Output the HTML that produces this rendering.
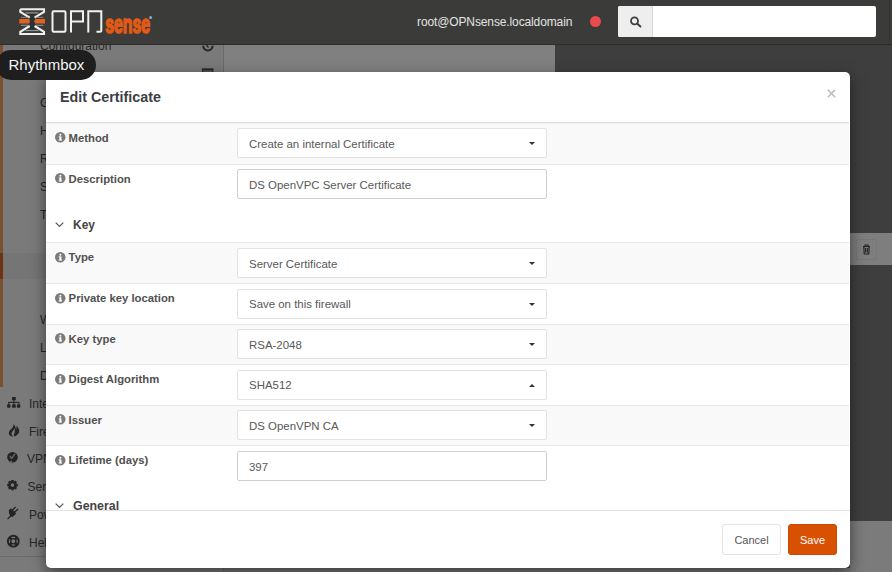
<!DOCTYPE html>
<html><head><meta charset="utf-8">
<style>
*{box-sizing:border-box;margin:0;padding:0}
html,body{width:892px;height:572px;overflow:hidden;background:#3e3e3e;font-family:"Liberation Sans",sans-serif;position:relative}
.a{position:absolute}
#hdr{z-index:5;left:0;top:0;width:892px;height:45px;background:#3b3b3a;border-bottom:1px solid #2c2c2c}
#side{left:0;top:45px;width:223px;height:527px;background:#7a7a7a}
#sideb{left:223px;top:44px;width:1px;height:528px;background:#6a6a6a}
#strip{left:224px;top:45px;width:331px;height:27px;background:#808080}
#band{left:850px;top:233px;width:42px;height:32px;background:#7e7e7e}
#bot{left:850px;top:521px;width:42px;height:51px;background:#7b7b7b}
#below{left:224px;top:568px;width:626px;height:4px;background:#777}
.si{position:absolute;left:40px;font-size:12px;color:#262626;white-space:nowrap;line-height:12px}
.mi{position:absolute;left:29px;font-size:12px;color:#262626;white-space:nowrap;line-height:12px}
#modal{left:46px;top:72px;width:804px;height:496px;background:#fff;border-radius:5px;overflow:hidden;box-shadow:0 5px 15px rgba(0,0,0,.5)}
#mt{position:absolute;left:14px;top:17px;font-size:14.3px;font-weight:bold;color:#3b3e44;line-height:16px;white-space:nowrap}
#msep{position:absolute;left:0;top:50px;width:803px;height:1px;background:#dedede}
#msep2{position:absolute;left:0;top:51px;width:803px;height:1px;background:#f0f0f0}
.gr{position:absolute;left:0;width:803px;background:#f9f9f9}
.ln{position:absolute;left:0;width:803px;height:1px;background:#e8e8e8}
.lbl{position:absolute;left:22.6px;font-size:11.3px;font-weight:bold;color:#505050;white-space:nowrap;line-height:11px}
.ic{position:absolute;left:9px;width:10.5px;height:10.5px;margin-top:0.2px}
.sel{position:absolute;left:191px;width:310px;height:30px;background:#fff;border:1px solid #e2e2e2;border-radius:2px;font-size:11.45px;color:#585858;padding:1px 0 0 11px;line-height:28px;white-space:nowrap}
.inp{border-color:#cfcfcf;height:30px}
.car{position:absolute;left:291px;top:13px;width:0;height:0;border-left:3.5px solid transparent;border-right:3.5px solid transparent;border-top:3px solid #333}
.car.up{border-top:none;border-bottom:3px solid #333}
.sh{position:absolute;left:27px;font-size:12px;font-weight:bold;color:#444;line-height:12px;white-space:nowrap}
.chev{position:absolute;left:9px;width:9px;height:6px}
.btn{position:absolute;top:452px;height:31px;font-size:11px;border-radius:3px;text-align:center;line-height:31px}
</style></head><body>
<div id="hdr" class="a">
  <div class="a" style="left:889px;top:0;width:1px;height:44px;background:#333"></div>
  <svg class="a" style="left:0;top:0" width="400" height="44" viewBox="0 0 400 44">
    <!-- logo mark -->
    <rect x="30" y="13.5" width="4.5" height="17" fill="#2b3139"/>
    <g fill="none" stroke="#f0f0f0" stroke-width="2.1" stroke-linejoin="miter">
      <path d="M20.3 9.3 H44 V11.8 L34.6 17.6 M20.3 9.3 V11.8 L29.7 17.6"/>
      <path d="M29.7 26 L20.3 31.8 V34 H44 V31.8 L34.6 26"/>
    </g>
    <path d="M25.5 12.9 H38.5" stroke="#a8a8a8" stroke-width="1"/>
    <path d="M25.5 30.6 H38.5" stroke="#9fb3b0" stroke-width="0.9"/>
    <path d="M19.3 19 H29 L30 21.3 L29 23.6 H19.3 Z" fill="#e2621c"/>
    <path d="M45 19 H35.3 L34.3 21.3 L35.3 23.6 H45 Z" fill="#e2621c"/>
    <path d="M21 17.4 H28.6 M35.7 17.4 H43.3" stroke="#8c8c8c" stroke-width="0.9"/>
    <path d="M21 25.3 H28.6 M35.7 25.3 H43.3" stroke="#9aa8a8" stroke-width="0.9"/>
    <!-- OPN -->
    <g fill="none" stroke="#f2f2f2" stroke-width="2">
      <rect x="52.5" y="11.2" width="13" height="20.6" rx="1.2"/>
      <path d="M71 32.5 V11.2 H83 V21.5 H71"/>
      <path d="M88.3 32.5 V11.2 H101.3 V30.6 Q101.3 31.8 100 31.8 H96.5"/>
    </g>
    <text x="105.2" y="33.2" font-family="Liberation Sans" font-weight="bold" font-size="19" fill="#e15a16" stroke="#e15a16" stroke-width="1.3" textLength="45" lengthAdjust="spacingAndGlyphs" transform="translate(0,-10.5) scale(1,1.32)">sense</text>
    <circle cx="150.6" cy="17.4" r="1.5" fill="#8aa8bd"/>
  </svg>
  <div class="a" style="left:417px;top:16px;font-size:12px;color:#e3e3e3;line-height:12px;white-space:nowrap;letter-spacing:-0.12px">root@OPNsense.localdomain</div>
  <div class="a" style="left:589.5px;top:16px;width:11px;height:11px;border-radius:50%;background:#e84b4b"></div>
  <div class="a" style="left:618px;top:6px;width:258px;height:31px;background:#fff;border-radius:2px"></div>
  <div class="a" style="left:618px;top:6px;width:35px;height:31px;background:#eeeeee;border-radius:2px 0 0 2px;border-right:1px solid #d8d8d8"></div>
  <svg class="a" style="left:629px;top:15px" width="13" height="13" viewBox="0 0 13 13"><circle cx="5.5" cy="5.9" r="3.5" fill="none" stroke="#3f3f3f" stroke-width="1.8"/><path d="M8.1 8.5 L11.4 11.5" stroke="#3f3f3f" stroke-width="2" stroke-linecap="round"/></svg>
</div>
<div id="side" class="a"></div>
<div class="a" style="left:0;top:45px;width:3px;height:208px;background:#7a5030"></div>
<div class="a" style="left:0;top:253px;width:223px;height:26px;background:#757575"></div>
<div class="a" style="left:0;top:253px;width:3px;height:26px;background:#6e3410"></div>
<div class="a" style="left:0;top:279px;width:3px;height:108px;background:#7a5030"></div>
<div class="a" style="left:0;top:556px;width:223px;height:1px;background:#6a6a6a"></div>
<div class="si" style="top:40px">Configuration</div>
<div class="si" style="top:97px">G</div>
<div class="si" style="top:125px">H</div>
<div class="si" style="top:153px">R</div>
<div class="si" style="top:181px">S</div>
<div class="si" style="top:209px">T</div>
<div class="si" style="top:314px">W</div>
<div class="si" style="top:342px">L</div>
<div class="si" style="top:370px">D</div>
<div class="mi" style="top:398px">Interfaces</div>
<div class="mi" style="top:426px">Firewall</div>
<div class="mi" style="top:453px;left:27px">VPN</div>
<div class="mi" style="top:481px;left:27.5px">Services</div>
<div class="mi" style="top:509px">Power</div>
<div class="mi" style="top:537px">Help</div>
<!-- sidebar icons -->
<svg class="a" style="left:0;top:380px" width="30" height="180" viewBox="0 380 30 180">
  <g fill="#232323">
    <!-- sitemap -->
    <rect x="12" y="397" width="3.8" height="3.3" rx="0.5"/><rect x="13.4" y="400" width="1" height="2.5"/><rect x="8.6" y="401.8" width="10.6" height="1.1"/>
    <rect x="8.3" y="402" width="1" height="2.3"/><rect x="13.4" y="402" width="1" height="2.3"/><rect x="18.4" y="402" width="1" height="2.3"/>
    <rect x="7.1" y="404.2" width="3.4" height="3.5" rx="0.9"/><rect x="12.1" y="404.2" width="3.6" height="3.5" rx="0.5"/><rect x="16.9" y="404.2" width="3.4" height="3.5" rx="0.9"/>
    <!-- fire -->
    <path d="M13.4 424 C 13.9 426.5, 12.2 428, 10.6 429.6 C 8.6 431.6, 8.2 434.4, 10.2 435.8 C 11.2 436.5, 12.3 436.6, 13.3 436.4 C 11.6 435.6, 11 433.6, 12.2 431.8 C 13 430.6, 14 429.6, 14.2 428.2 C 15.2 429.8, 15 431.6, 14.4 433.2 C 14 434.4, 13.6 435.6, 14.4 436.4 C 17.6 435.6, 19.4 433.2, 19.2 430.6 C 19 428.4, 17.6 426.6, 16.2 425.8 C 16.8 427.4, 16.6 428.6, 16 429.4 C 15.6 427.2, 14.8 425.2, 13.4 424 Z"/>
    <!-- globe -->
    <circle cx="12.5" cy="457.3" r="5.3"/>
    <!-- gear -->
    <g transform="translate(12.5 485.1)">
      <rect x="-1.3" y="-5.2" width="2.6" height="10.4" rx="0.4"/>
      <rect x="-1.3" y="-5.2" width="2.6" height="10.4" rx="0.4" transform="rotate(45)"/>
      <rect x="-1.3" y="-5.2" width="2.6" height="10.4" rx="0.4" transform="rotate(90)"/>
      <rect x="-1.3" y="-5.2" width="2.6" height="10.4" rx="0.4" transform="rotate(135)"/>
      <circle r="3.9"/>
    </g>
    <!-- plug -->
    <path d="M7.2 518.6 L7.9 519.4 L11.1 516.6 L12.6 517.1 L16.3 513.6 L15.2 512.5 L18.6 509.4 L17.6 508.5 L14.3 511.6 L13.1 510.4 L16.2 507.3 L15.2 506.4 L12 509.4 L10.8 508.3 L8.9 510.3 C 8.6 512.2, 9.2 514.2, 10.2 515.5 Z"/>
  </g>
  <circle cx="12.5" cy="485.1" r="1.8" fill="#7a7a7a"/>
  <path d="M9.8 455.8 L11.6 458.4 L15.2 453.6 M10.4 461.2 L12.2 462" stroke="#6c6c6c" stroke-width="1.3" fill="none"/>
  <circle cx="13.3" cy="541.2" r="5.4" fill="none" stroke="#232323" stroke-width="1.9"/>
  <circle cx="13.3" cy="541.2" r="2.6" fill="none" stroke="#232323" stroke-width="1.3"/>
  <g stroke="#232323" stroke-width="2.4"><path d="M9.3 537.2 L11.4 539.3 M17.3 537.2 L15.2 539.3 M9.3 545.2 L11.4 543.1 M17.3 545.2 L15.2 543.1"/></g>
</svg>
<svg class="a" style="left:198px;top:45px" width="20" height="27" viewBox="198 45 20 27">
  <path d="M203.2 45.8 A4.7 4.7 0 1 0 212.6 45.8" fill="none" stroke="#232323" stroke-width="2"/>
  <path d="M206.6 45 L208.4 47.6" fill="none" stroke="#232323" stroke-width="1.3"/>
  <rect x="202" y="68.3" width="11.4" height="3.7" fill="#2a2a2a"/>
  <rect x="203.2" y="70.4" width="9" height="1.6" fill="#555"/>
</svg>
<div id="sideb" class="a"></div>
<div id="strip" class="a"></div>
<div id="band" class="a"></div>
<div class="a" style="left:856px;top:239px;width:21px;height:21px;border:1px solid #777;border-radius:2px"></div>
<svg class="a" style="left:860px;top:243px" width="13" height="13" viewBox="0 0 13 13"><g fill="none" stroke="#222" stroke-width="1.1"><path d="M3 3.5 H10 M5 3.5 V2 H8 V3.5 M3.8 3.5 L4.2 11 H8.8 L9.2 3.5 M5.6 5 V9.5 M7.4 5 V9.5"/></g></svg>
<div id="bot" class="a"></div>
<div id="below" class="a"></div>

<div id="modal" class="a">
  <div id="mt">Edit Certificate</div>
  <svg class="a" style="left:781px;top:17px" width="9" height="9" viewBox="0 0 9 9"><path d="M0.8 0.8 L8.2 8.2 M8.2 0.8 L0.8 8.2" stroke="#bdbdbd" stroke-width="1.6"/></svg>
  <div id="msep"></div><div id="msep2"></div>
  <div class="gr" style="top:52px;height:40px"></div>
  <div class="ln" style="top:92px"></div>
  <div class="ln" style="top:170px"></div>
  <div class="gr" style="top:171px;height:40px"></div>
  <div class="ln" style="top:211px"></div>
  <div class="ln" style="top:252px"></div>
  <div class="gr" style="top:253px;height:39px"></div>
  <div class="ln" style="top:292px"></div>
  <div class="ln" style="top:333px"></div>
  <div class="gr" style="top:334px;height:39px"></div>
  <div class="ln" style="top:373px"></div>
  <div class="a" style="left:0;top:438px;width:804px;height:1px;background:#e3e3e3"></div>

  <svg class="ic" style="top:60px" viewBox="0 0 10 10"><circle cx="5" cy="5" r="5" fill="#7b7b7b"/><rect x="4.2" y="4.2" width="1.9" height="3.6" fill="#fff"/><rect x="3.5" y="7.2" width="3.2" height="0.9" fill="#fff"/><rect x="3.5" y="4.2" width="1.2" height="0.8" fill="#fff"/><circle cx="5.1" cy="2.6" r="0.95" fill="#fff"/></svg>
  <div class="lbl" style="top:61px">Method</div>
  <div class="sel" style="top:56px">Create an internal Certificate<span class="car"></span></div>

  <svg class="ic" style="top:100.5px" viewBox="0 0 10 10"><circle cx="5" cy="5" r="5" fill="#7b7b7b"/><rect x="4.2" y="4.2" width="1.9" height="3.6" fill="#fff"/><rect x="3.5" y="7.2" width="3.2" height="0.9" fill="#fff"/><rect x="3.5" y="4.2" width="1.2" height="0.8" fill="#fff"/><circle cx="5.1" cy="2.6" r="0.95" fill="#fff"/></svg>
  <div class="lbl" style="top:101.5px">Description</div>
  <div class="sel inp" style="top:97px">DS OpenVPC Server Certificate</div>

  <svg class="chev" style="top:149.5px" viewBox="0 0 9 6"><path d="M0.7 0.7 L4.5 4.5 L8.3 0.7" fill="none" stroke="#555" stroke-width="1.2"/></svg>
  <div class="sh" style="top:146.5px">Key</div>

  <svg class="ic" style="top:180px" viewBox="0 0 10 10"><circle cx="5" cy="5" r="5" fill="#7b7b7b"/><rect x="4.2" y="4.2" width="1.9" height="3.6" fill="#fff"/><rect x="3.5" y="7.2" width="3.2" height="0.9" fill="#fff"/><rect x="3.5" y="4.2" width="1.2" height="0.8" fill="#fff"/><circle cx="5.1" cy="2.6" r="0.95" fill="#fff"/></svg>
  <div class="lbl" style="top:180px">Type</div>
  <div class="sel" style="top:176px">Server Certificate<span class="car"></span></div>

  <svg class="ic" style="top:221px" viewBox="0 0 10 10"><circle cx="5" cy="5" r="5" fill="#7b7b7b"/><rect x="4.2" y="4.2" width="1.9" height="3.6" fill="#fff"/><rect x="3.5" y="7.2" width="3.2" height="0.9" fill="#fff"/><rect x="3.5" y="4.2" width="1.2" height="0.8" fill="#fff"/><circle cx="5.1" cy="2.6" r="0.95" fill="#fff"/></svg>
  <div class="lbl" style="top:221px">Private key location</div>
  <div class="sel" style="top:217px;padding-top:0">Save on this firewall<span class="car"></span></div>

  <svg class="ic" style="top:261px" viewBox="0 0 10 10"><circle cx="5" cy="5" r="5" fill="#7b7b7b"/><rect x="4.2" y="4.2" width="1.9" height="3.6" fill="#fff"/><rect x="3.5" y="7.2" width="3.2" height="0.9" fill="#fff"/><rect x="3.5" y="4.2" width="1.2" height="0.8" fill="#fff"/><circle cx="5.1" cy="2.6" r="0.95" fill="#fff"/></svg>
  <div class="lbl" style="top:262px">Key type</div>
  <div class="sel" style="top:257px">RSA-2048<span class="car"></span></div>

  <svg class="ic" style="top:302px" viewBox="0 0 10 10"><circle cx="5" cy="5" r="5" fill="#7b7b7b"/><rect x="4.2" y="4.2" width="1.9" height="3.6" fill="#fff"/><rect x="3.5" y="7.2" width="3.2" height="0.9" fill="#fff"/><rect x="3.5" y="4.2" width="1.2" height="0.8" fill="#fff"/><circle cx="5.1" cy="2.6" r="0.95" fill="#fff"/></svg>
  <div class="lbl" style="top:302px">Digest Algorithm</div>
  <div class="sel" style="top:298px;padding-top:0">SHA512<span class="car up"></span></div>

  <svg class="ic" style="top:342px" viewBox="0 0 10 10"><circle cx="5" cy="5" r="5" fill="#7b7b7b"/><rect x="4.2" y="4.2" width="1.9" height="3.6" fill="#fff"/><rect x="3.5" y="7.2" width="3.2" height="0.9" fill="#fff"/><rect x="3.5" y="4.2" width="1.2" height="0.8" fill="#fff"/><circle cx="5.1" cy="2.6" r="0.95" fill="#fff"/></svg>
  <div class="lbl" style="top:343px">Issuer</div>
  <div class="sel" style="top:338px">DS OpenVPN CA<span class="car"></span></div>

  <svg class="ic" style="top:383px" viewBox="0 0 10 10"><circle cx="5" cy="5" r="5" fill="#7b7b7b"/><rect x="4.2" y="4.2" width="1.9" height="3.6" fill="#fff"/><rect x="3.5" y="7.2" width="3.2" height="0.9" fill="#fff"/><rect x="3.5" y="4.2" width="1.2" height="0.8" fill="#fff"/><circle cx="5.1" cy="2.6" r="0.95" fill="#fff"/></svg>
  <div class="lbl" style="top:383px">Lifetime (days)</div>
  <div class="sel inp" style="top:379px">397</div>

  <div class="a" style="left:0;top:414px;width:803px;height:24px;overflow:hidden">
    <svg class="chev" style="top:16.6px" viewBox="0 0 9 6"><path d="M0.7 0.7 L4.5 4.5 L8.3 0.7" fill="none" stroke="#555" stroke-width="1.2"/></svg>
    <div class="sh" style="top:13.5px;font-size:12.4px">General</div>
  </div>

  <div class="btn" style="left:676px;width:59px;border:1px solid #e3e3e3;color:#555;background:#fff;line-height:30px">Cancel</div>
  <div class="btn" style="left:742px;width:49px;background:#d85002;border:1px solid #c94a02;color:#fff;line-height:30px">Save</div>
</div>

<div class="a" style="left:-4px;top:50px;width:100px;height:30px;border-radius:15px;background:#1e1e1e"></div>
<div class="a" style="left:8.5px;top:56px;font-size:15px;color:#f5f5f5;line-height:17px;white-space:nowrap">Rhythmbox</div>
</body></html>
